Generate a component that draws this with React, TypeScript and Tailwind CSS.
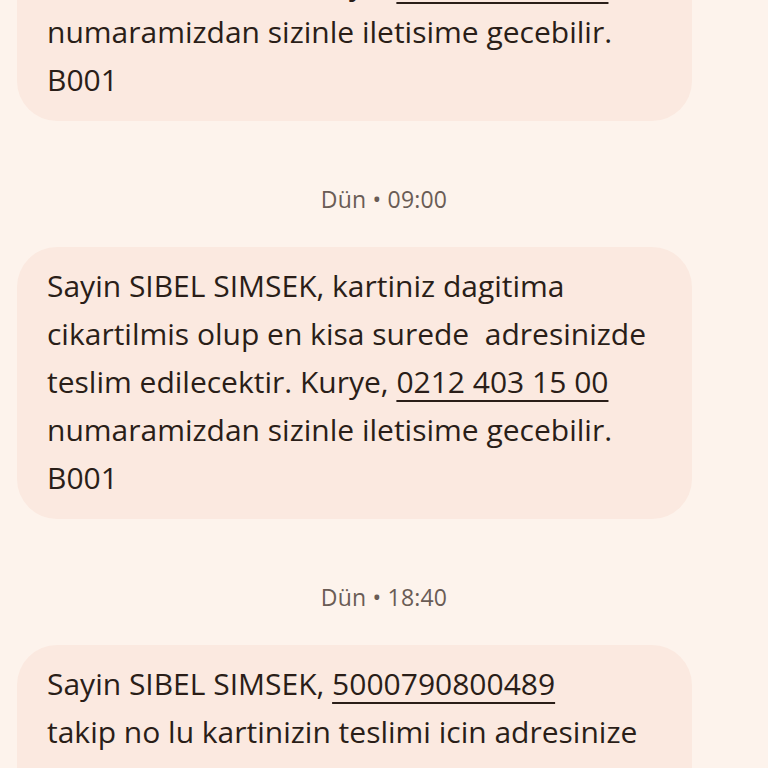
import React from "react";

const font = { fontFamily: "'Open Sans', 'Noto Sans', sans-serif" };

function Link({ children }: { children: React.ReactNode }) {
  return <span className="underline decoration-[2px] underline-offset-[7px]">{children}</span>;
}

function Bubble({ children, className = "" }: { children: React.ReactNode; className?: string }) {
  return (
    <div className={"ml-[17px] w-[675px] rounded-[40px] bg-[#fbe9e0] pl-[30px] pr-[10px] pt-[15px] pb-[17px] text-[30px] leading-[48px] text-[#2a1e18] whitespace-pre " + className}>
      {children}
    </div>
  );
}

function Stamp({ text }: { text: string }) {
  return (
    <div className="flex h-[126px] items-center justify-center pt-[30px] text-[23px] tracking-[0.2px] text-[#6a5c55]">
      {text}
    </div>
  );
}

export default function App() {
  const msg = (
    <>
      Sayin SIBEL SIMSEK, kartiniz dagitima{"\n"}
      cikartilmis olup en kisa surede  adresinizde{"\n"}
      teslim edilecektir. Kurye, <Link>0212 403 15 00</Link>{"\n"}
      numaramizdan sizinle iletisime gecebilir.{"\n"}
      B001
    </>
  );
  return (
    <div className="h-[768px] w-[768px] overflow-hidden bg-[#fdf3ec]" style={font}>
      <Bubble className="-mt-[151px]">{msg}</Bubble>
      <Stamp text="Dün • 09:00" />
      <Bubble>{msg}</Bubble>
      <Stamp text="Dün • 18:40" />
      <Bubble>
        Sayin SIBEL SIMSEK, <Link>5000790800489</Link>{"\n"}
        takip no lu kartinizin teslimi icin adresinize{"\n"}
        gelinmis ancak size ulasilamamistir.
      </Bubble>
    </div>
  );
}
